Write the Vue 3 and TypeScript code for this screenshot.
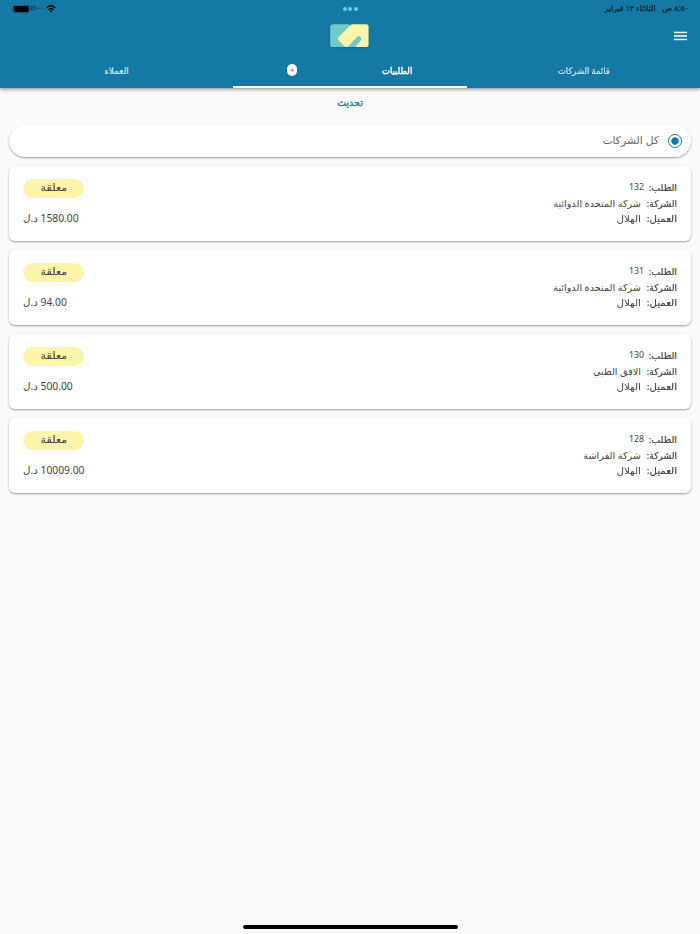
<script setup lang="ts">
interface Order {
  id: number
  company: string
  customer: string
  total: string
}

const orders: Order[] = [
  { id: 132, company: 'شركة المتحدة الدوائية', customer: 'الهلال', total: '1580.00' },
  { id: 131, company: 'شركة المتحدة الدوائية', customer: 'الهلال', total: '94.00' },
  { id: 130, company: 'الافق الطبي', customer: 'الهلال', total: '500.00' },
  { id: 128, company: 'شركة الفراشة', customer: 'الهلال', total: '10009.00' },
]
</script>

<template>
  <div class="screen" dir="rtl">
    <header class="header">
      <div class="status">
        <div class="clock"><span>٨:٥٠ ص</span><span>الثلاثاء ١٣ فبراير</span></div>
        <div class="dots"><i></i><i></i><i></i></div>
        <div class="power" dir="ltr">
          <svg class="battery" width="19" height="8" viewBox="0 0 19 8">
            <path d="M1.2 2.8Q0 4 1.2 5.2Z" fill="#0b4a68" />
            <rect x="2" y="0.4" width="16.5" height="7.2" rx="2" fill="none" stroke="#0c5679" stroke-width=".8" />
            <rect x="2.8" y="1.1" width="14.8" height="5.8" rx="1.2" fill="#000" />
          </svg>
          <span class="percent"><bdi>٪</bdi><bdi>١٠٠</bdi></span>
          <svg class="wifi" width="10" height="8" viewBox="0 0 10 8" fill="none" stroke="#000">
            <path d="M.7 2.8Q5 -1.1 9.3 2.8" stroke-width="1.4" />
            <path d="M2.4 4.7Q5 2.5 7.6 4.7" stroke-width="1.3" />
            <path d="M3.5 5.8Q5 4.8 6.5 5.8L5 7.5Z" fill="#000" stroke="none" />
          </svg>
        </div>
      </div>
      <div class="toolbar">
        <svg class="menu" width="13" height="10" viewBox="0 0 13 10" fill="#fff">
          <rect y="0.7" width="13" height="1.5" /><rect y="4.2" width="13" height="1.5" /><rect y="7.7" width="13" height="1.5" />
        </svg>
        <svg class="logo" width="40" height="26" viewBox="0 0 40 26">
          <rect x="0.2" y="1.2" width="24" height="22.8" rx="2.6" fill="#70cbc8" />
          <path d="M18.8 1L20.7 3L22.6 1Z" fill="#147aa5" />
          <path d="M22.5 1.2H36Q38.6 1.2 38.6 3.8V21.4Q38.6 24 36 24H16.5Q15.4 24 14.4 23L8.4 17.2Q7 15.6 8.4 14.2L20.2 2.4Q21.2 1.2 22.5 1.2Z" fill="#fcf4ab" />
          <path d="M17.4 24L27.2 13.8Q28.7 12.4 30.2 13.8L30.8 14.6Q32 16.2 30.8 17.8L25.4 24Z" fill="#70cbc8" />
        </svg>
      </div>
      <nav class="tabs">
        <div class="tab"><span class="t-companies">قائمة الشركات</span></div>
        <div class="tab active"><span class="t-orders">الطلبيات</span><b class="badge">4</b></div>
        <div class="tab"><span class="t-customers">العملاء</span></div>
      </nav>
    </header>

    <main>
      <div class="refresh"><span>تحديث</span></div>
      <section class="filter">
        <i class="radio"></i>
        <span>كل الشركات</span>
      </section>
      <article v-for="order in orders" :key="order.id" class="card">
        <div class="info">
          <div class="row first"><b>الطلب:</b><span class="number">{{ order.id }}</span></div>
          <div class="row"><b>الشركة:</b><span>{{ order.company }}</span></div>
          <div class="row last"><b>العميل:</b><span>{{ order.customer }}</span></div>
        </div>
        <div class="side">
          <div class="chip"><span>معلقة</span></div>
          <div class="total"><span>{{ order.total }}</span> <span>د.ل</span></div>
        </div>
      </article>
    </main>
    <div class="home"></div>
  </div>
</template>

<style>
body { margin: 0; background: #fafafa; }
</style>

<style scoped>
.screen {
  width: 700px;
  height: 934px;
  display: flex;
  flex-direction: column;
  overflow: hidden;
  background: #fafafa;
  color: #444;
  font-family: "Noto Sans", "DejaVu Sans", sans-serif;
}
.header {
  height: 88px;
  flex: none;
  background: #147aa5;
  box-shadow: 0 1px 4px rgba(0, 0, 0, .5);
  display: flex;
  flex-direction: column;
}
.status {
  height: 17px;
  display: grid;
  grid-template-columns: 1fr auto 1fr;
  align-items: center;
  padding: 0 11px;
  color: #06222f;
  font-size: 8px;
}
.clock {
  display: flex;
  gap: 7px;
  padding-bottom: 2px;
  white-space: nowrap;
  -webkit-text-stroke: .25px #06222f;
}
.clock span:last-child { transform: scaleX(.97); transform-origin: right; }
.dots { display: flex; gap: 1.5px; }
.dots i { width: 4px; height: 4px; border-radius: 50%; background: #70cbf4; }
.power { display: flex; align-items: center; justify-self: end; }
.percent {
  width: 14px;
  margin: 0 1.5px 0 0;
  font-size: 6.5px;
  line-height: 8px;
  padding-bottom: 1px;
  -webkit-text-stroke: .3px #06222f;
}
.toolbar {
  height: 37px;
  display: grid;
  grid-template-columns: 1fr auto 1fr;
  align-items: center;
  padding: 0 13px;
}
.logo { filter: drop-shadow(0 1px 1px rgba(0, 0, 0, .15)); }
.tabs { display: grid; grid-template-columns: repeat(3, 1fr); height: 34px; }
.tab {
  display: flex;
  align-items: center;
  justify-content: center;
  color: #d8eaf1;
  font-size: 9px;
  border-bottom: 2px solid transparent;
  box-sizing: border-box;
  -webkit-text-stroke: .15px #d8eaf1;
}
.t-companies { transform: scaleX(.93); }
.active {
  color: #fff;
  justify-content: space-between;
  padding: 0 54px 0 53.5px;
  border-color: #fff;
  -webkit-text-stroke: .4px #fff;
}
.t-orders { transform: scaleX(.94); transform-origin: right; }
.badge {
  width: 10px;
  height: 12px;
  border-radius: 5px;
  background: #fff;
  color: #147aa5;
  font-size: 6px;
  line-height: 12px;
  text-align: center;
  font-weight: 400;
  -webkit-text-stroke: 0;
}
.refresh {
  height: 28px;
  display: flex;
  justify-content: center;
  align-items: center;
  margin-bottom: 9px;
  color: #147aa5;
  font-size: 9.5px;
  -webkit-text-stroke: .35px #147aa5;
}
.filter {
  height: 32px;
  margin: 0 9px 9px;
  padding-right: 9px;
  border-radius: 16px;
  background: #fff;
  box-shadow: 0 1px 2px rgba(0, 0, 0, .38);
  display: flex;
  align-items: center;
  gap: 9px;
  box-sizing: border-box;
  color: #666;
  font-size: 10.8px;
}
.filter span { padding-bottom: 3px; }
.radio {
  width: 14px;
  height: 14px;
  box-sizing: border-box;
  border: 1.5px solid #147aa5;
  border-radius: 50%;
  background: radial-gradient(circle, #147aa5 3.4px, #fff 4px);
}
.card {
  height: 75px;
  margin: 0 9px 9px;
  padding: 13px 14px 0;
  box-sizing: border-box;
  border-radius: 6px;
  background: #fff;
  box-shadow: 0 1px 2px rgba(0, 0, 0, .38);
  display: flex;
  justify-content: space-between;
}
.row { height: 15px; line-height: 15px; display: flex; gap: 6px; font-size: 9.7px; white-space: nowrap; }
.row b { width: 30px; font-weight: 400; font-size: 9.5px; -webkit-text-stroke: .2px #444; }
.row.first { height: 16px; padding-top: 1px; gap: 5px; }
.row.first b { width: 28px; }
.row .number { font-size: 8.8px; }
.row:nth-child(2) b { transform: scaleX(.96); transform-origin: right; }
.row.last b, .row.last span { transform: scaleX(1.07); transform-origin: right; }
.side { display: flex; flex-direction: column; align-items: flex-end; }
.chip {
  width: 61px;
  height: 19px;
  border-radius: 10px;
  background: #fcf4ab;
  display: flex;
  justify-content: center;
  font-size: 10px;
  line-height: 17px;
}
.chip span { transform: scaleX(1.12); -webkit-text-stroke: .1px #444; }
.total { margin-top: 13px; font-size: 10.3px; line-height: 14px; white-space: nowrap; }
.home { width: 215px; height: 4px; margin: auto auto 5.5px; border-radius: 2px; background: #000; }
</style>
